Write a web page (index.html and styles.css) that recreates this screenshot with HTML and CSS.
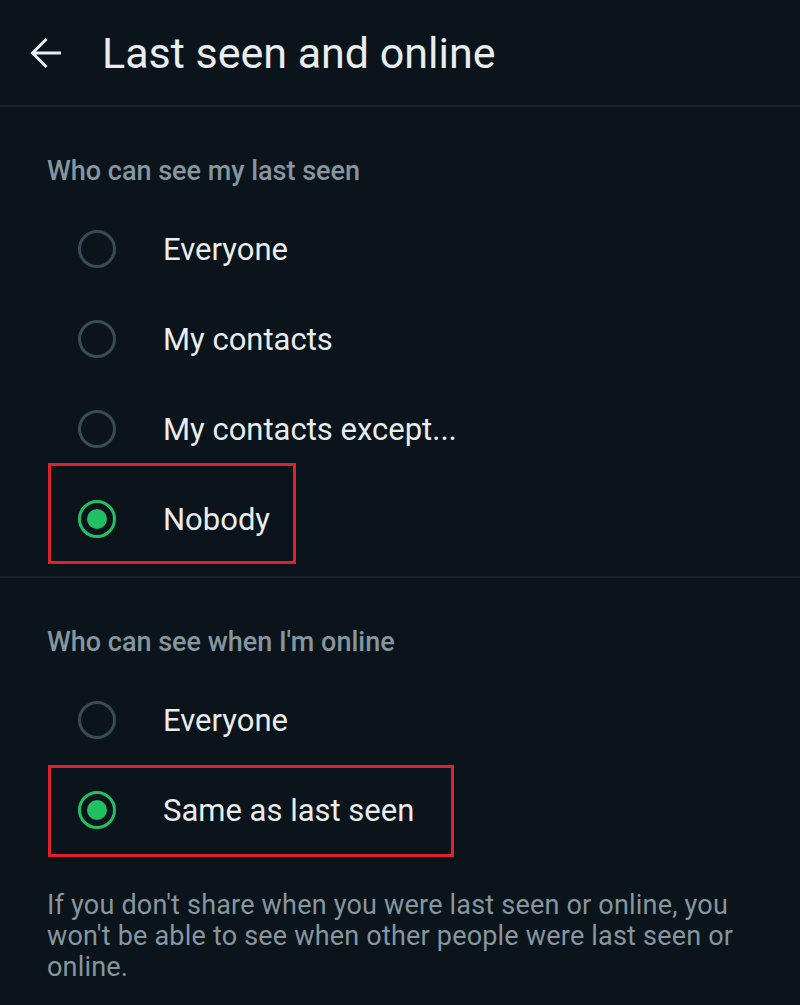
FILE: index.html
```html
<!DOCTYPE html>
<html lang="en">
<head>
  <meta charset="UTF-8">
  <title>Last seen and online</title>
  <meta name="viewport" content="width=device-width, initial-scale=1">
  <link rel="stylesheet" href="styles.css">
</head>
<body>
  <header class="topbar">
    <button class="back" aria-label="Back">
      <svg width="32" height="32" viewBox="0 0 32 32"><path d="M2.5 16H31M16.5 2L2.5 16l14 14" fill="none" stroke="#e9edef" stroke-width="3"/></svg>
    </button>
    <h1>Last seen and online</h1>
  </header>

  <section class="group">
    <h2>Who can see my last seen</h2>
    <div class="option"><span class="radio"></span><span class="label">Everyone</span></div>
    <div class="option"><span class="radio"></span><span class="label">My contacts</span></div>
    <div class="option"><span class="radio"></span><span class="label">My contacts except...</span></div>
    <div class="option"><span class="radio checked"></span><span class="label">Nobody</span><span class="mark mark-nobody"></span></div>
  </section>

  <section class="group">
    <h2>Who can see when I'm online</h2>
    <div class="option"><span class="radio"></span><span class="label">Everyone</span></div>
    <div class="option"><span class="radio checked"></span><span class="label">Same as last seen</span><span class="mark mark-same"></span></div>
    <p class="note">If you don't share when you were last seen or online, you won't be able to see when other people were last seen or online.</p>
  </section>
</body>
</html>
```

FILE: styles.css
```css
body {
  background: #0b141a;
  font-family: Roboto, "Noto Sans", Arial, sans-serif;
  color: #e9edef;
  margin: 0;
  padding: 0;
  height: 1005px;
  overflow: hidden;
}
.topbar {
  display: flex;
  align-items: center;
  height: 107px;
  border-bottom: 2px solid #182229;
  box-sizing: border-box;
}
.back {
  background: none;
  border: none;
  padding: 0;
  margin-left: 30px;
  width: 32px;
  height: 32px;
  display: flex;
}
h1 {
  margin: 0 0 0 40px;
  font-size: 43px;
  font-weight: 400;
}
.group {
  padding: 44px 0 12px;
  border-bottom: 2px solid #182229;
}
.group:last-child {
  border-bottom: none;
}
h2 {
  margin: 0 0 13px 47px;
  font-size: 27px;
  font-weight: 500;
  color: #8696a0;
  line-height: 40px;
}
.option {
  position: relative;
  display: flex;
  align-items: center;
  height: 90px;
}
.radio {
  width: 32px;
  height: 32px;
  border: 3px solid #3b4a54;
  border-radius: 50%;
  margin-left: 78px;
  box-sizing: content-box;
  display: flex;
  align-items: center;
  justify-content: center;
}
.radio.checked {
  border-color: #21c063;
}
.radio.checked::after {
  content: "";
  width: 20px;
  height: 20px;
  border-radius: 50%;
  background: #21c063;
}
.label {
  margin-left: 47px;
  font-size: 31px;
}
.mark {
  position: absolute;
  left: 48px;
  border: 3px solid #e0202a;
  box-sizing: border-box;
}
.mark-nobody {
  top: -11px;
  height: 101px;
  width: 248px;
}
.mark-same {
  top: 0;
  height: 92px;
  width: 406px;
}
.note {
  margin: 35px 40px 0 47px;
  font-size: 27px;
  letter-spacing: 0.2px;
  line-height: 31px;
  color: #8696a0;
}
```
